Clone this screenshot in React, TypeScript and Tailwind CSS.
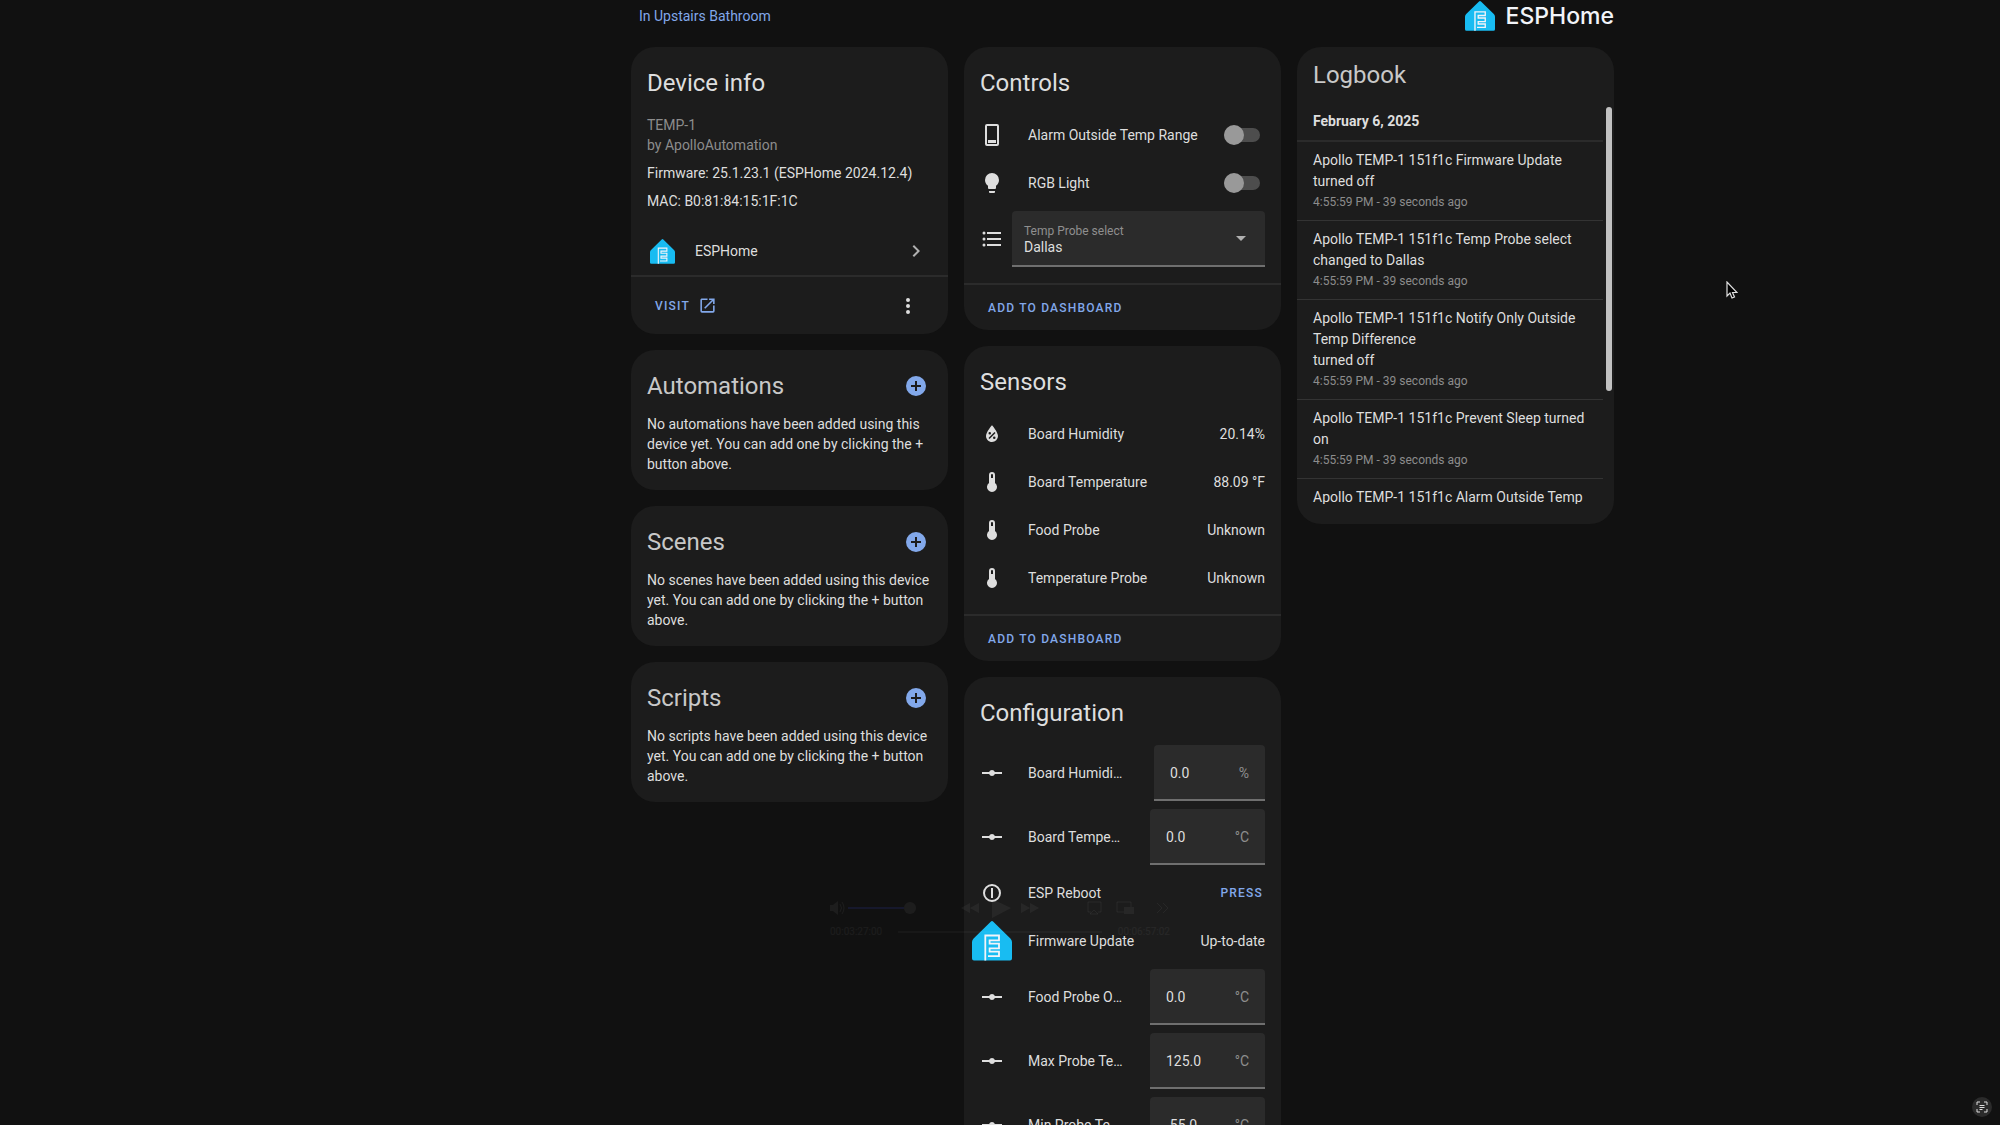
import { useState } from "react";
import type { ReactNode } from "react";

const ICONS = {
  toggle:
    "M17,1H7A2,2 0 0,0 5,3V21A2,2 0 0,0 7,23H17A2,2 0 0,0 19,21V3A2,2 0 0,0 17,1M17,21H7V3H17V21M8,17H16V20H8V17Z",
  bulb: "M12,2A7,7 0 0,0 5,9C5,11.38 6.19,13.47 8,14.74V17A1,1 0 0,0 9,18H15A1,1 0 0,0 16,17V14.74C17.81,13.47 19,11.38 19,9A7,7 0 0,0 12,2M9,21A1,1 0 0,0 10,22H14A1,1 0 0,0 15,21V20H9V21Z",
  list: "M7,5H21V7H7V5M7,13V11H21V13H7M4,4.5A1.5,1.5 0 0,1 4,7.5A1.5,1.5 0 0,1 4,4.5M4,10.5A1.5,1.5 0 0,1 4,13.5A1.5,1.5 0 0,1 4,10.5M7,19V17H21V19H7M4,16.5A1.5,1.5 0 0,1 4,19.5A1.5,1.5 0 0,1 4,16.5Z",
  humidity:
    "M12,3.25C12,3.25 6,10 6,14C6,17.32 8.69,20 12,20A6,6 0 0,0 18,14C18,10 12,3.25 12,3.25M14.47,9.97L15.53,11.03L9.53,17.03L8.47,15.97M9.75,10A1.25,1.25 0 0,1 9.75,12.5A1.25,1.25 0 0,1 9.75,10M14.25,14.5A1.25,1.25 0 0,1 14.25,17A1.25,1.25 0 0,1 14.25,14.5Z",
  thermometer:
    "M15 13V5A3 3 0 0 0 9 5V13A5 5 0 1 0 15 13M12 4A1 1 0 0 1 13 5V8H11V5A1 1 0 0 1 12 4Z",
  vertex:
    "M22,11H14.82C14.4,9.84 13.3,9 12,9C10.7,9 9.6,9.84 9.18,11H2V13H9.18C9.6,14.16 10.7,15 12,15C13.3,15 14.4,14.16 14.82,13H22V11Z",
  reboot:
    "M12,3A9,9 0 0,0 12,21A9,9 0 0,0 12,3M12,19A7,7 0 0,1 12,5A7,7 0 0,1 12,19M11,7H13V17H11V7Z",
  open: "M14,3V5H17.59L7.76,14.83L9.17,16.24L19,6.41V10H21V3M19,19H5V5H12V3H5C3.89,3 3,3.9 3,5V19A2,2 0 0,0 5,21H19A2,2 0 0,0 21,19V12H19V19Z",
  dots: "M12,16A2,2 0 0,1 12,20A2,2 0 0,1 12,16M12,10A2,2 0 0,1 12,14A2,2 0 0,1 12,10M12,4A2,2 0 0,1 12,8A2,2 0 0,1 12,4Z",
  plus: "M17,13H13V17H11V13H7V11H11V7H13V11H17M12,2A10,10 0 0,0 12,22A10,10 0 0,0 12,2Z",
  chevron: "M8.59,16.58L13.17,12L8.59,7.41L10,6L16,12L10,18L8.59,16.58Z",
};

type IconName = keyof typeof ICONS;

function Icon({ name, className = "size-6" }: { name: IconName; className?: string }) {
  return (
    <svg viewBox="0 0 24 24" className={`shrink-0 fill-current ${className}`} fillRule="evenodd" aria-hidden="true">
      <path d={ICONS[name]} />
    </svg>
  );
}

function EspHomeLogo({ className }: { className: string }) {
  return (
    <svg viewBox="0 0 40 40" className={`shrink-0 ${className}`} aria-hidden="true">
      <path
        d="M18.7 0.7a1.8 1.8 0 0 1 2.6 0L38.4 17.4A5 5 0 0 1 40 21V37.5A2 2 0 0 1 38 39.5H2A2 2 0 0 1 0 37.5V21a5 5 0 0 1 1.6-3.6Z"
        fill="#18bcf2"
      />
      <path
        d="M13.3 39.5V14.5H27V19.3H17.6V22.7H27V27.4H17.6V30.6H27V35.2H16"
        fill="none"
        stroke="#f2f4f9"
        strokeWidth="1.8"
      />
    </svg>
  );
}

function Card({ children }: { children: ReactNode }) {
  return <section className="rounded-3xl bg-[#1c1c1c]">{children}</section>;
}

function CardFooter({ children }: { children: ReactNode }) {
  return (
    <div className="flex h-[47px] items-center border-t-2 border-[#2b2b2b] px-6">{children}</div>
  );
}

function TextButton({ children }: { children: ReactNode }) {
  return (
    <button className="flex items-center gap-2 text-xs font-medium tracking-widest text-[#82a8ea] uppercase">
      {children}
    </button>
  );
}

function Row({ icon, label, children }: { icon: ReactNode; label: string; children: ReactNode }) {
  return (
    <div className="flex min-h-10 items-center">
      <span className="flex w-10 shrink-0 justify-center">{icon}</span>
      <span className="min-w-0 flex-1 truncate pl-4">{label}</span>
      {children}
    </div>
  );
}

function EntityCard({
  title,
  footer = true,
  children,
}: {
  title: string;
  footer?: boolean;
  children: ReactNode;
}) {
  return (
    <Card>
      <h2 className="px-4 pt-3 text-2xl leading-[48px]">{title}</h2>
      <div className="flex flex-col gap-2 pt-2 pr-4 pb-4 pl-2">{children}</div>
      {footer && (
        <CardFooter>
          <TextButton>Add to dashboard</TextButton>
        </CardFooter>
      )}
    </Card>
  );
}

function ToggleRow({ icon, label }: { icon: IconName; label: string }) {
  const [on, setOn] = useState(false);

  return (
    <Row icon={<Icon name={icon} />} label={label}>
      <label className="relative mr-[5px] flex h-5 w-9 items-center">
        <input
          type="checkbox"
          role="switch"
          aria-label={label}
          checked={on}
          onChange={() => setOn(!on)}
          className="peer absolute inset-0 appearance-none"
        />
        <span className="h-[14px] w-9 rounded-full bg-[#4d4d4d]" />
        <span className="pointer-events-none absolute left-0 size-5 rounded-full bg-[#999999] peer-checked:left-4 peer-checked:bg-[#82a8ea]" />
      </label>
    </Row>
  );
}

function NumberRow({ label, value, unit }: { label: string; value: string; unit: string }) {
  return (
    <Row icon={<Icon name="vertex" />} label={label}>
      <label
        className={`flex h-14 shrink-0 items-center rounded-t border-b-2 border-[#6f6f6f] bg-[#2b2b2b] px-4 pt-0.5 ${
          unit === "%" ? "ml-[30px] w-[111px]" : "ml-[26px] w-[115px]"
        }`}
      >
        <input aria-label={label} defaultValue={value} className="w-full min-w-0 outline-none" />
        <span className="text-[#8f8f8f]">{unit}</span>
      </label>
    </Row>
  );
}

const EMPTY_SECTIONS = [
  { title: "Automations", noun: "automations" },
  { title: "Scenes", noun: "scenes" },
  { title: "Scripts", noun: "scripts" },
];

const SENSORS: { icon: IconName; label: string; value: string }[] = [
  { icon: "humidity", label: "Board Humidity", value: "20.14%" },
  { icon: "thermometer", label: "Board Temperature", value: "88.09 °F" },
  { icon: "thermometer", label: "Food Probe", value: "Unknown" },
  { icon: "thermometer", label: "Temperature Probe", value: "Unknown" },
];

const LOG = [
  ["Apollo TEMP-1 151f1c Firmware Update", "turned off"],
  ["Apollo TEMP-1 151f1c Temp Probe select", "changed to Dallas"],
  ["Apollo TEMP-1 151f1c Notify Only Outside", "Temp Difference", "turned off"],
  ["Apollo TEMP-1 151f1c Prevent Sleep turned", "on"],
  ["Apollo TEMP-1 151f1c Alarm Outside Temp", "Range turned off"],
];

function DeviceInfo() {
  return (
    <Card>
      <div className="px-4 pt-3">
        <h2 className="text-2xl leading-[48px]">Device info</h2>
        <p className="pt-2 text-[#8c8c8c]">TEMP-1</p>
        <p className="text-[#8c8c8c]">by ApolloAutomation</p>
        <p className="pt-2">Firmware: 25.1.23.1 (ESPHome 2024.12.4)</p>
        <p className="pt-2">MAC: B0:81:84:15:1F:1C</p>
      </div>
      <a href="#integration" className="mt-4 flex h-12 items-center pr-5 pl-[19px]">
        <EspHomeLogo className="size-[25px]" />
        <span className="flex-1 pl-5">ESPHome</span>
        <Icon name="chevron" className="size-6 text-[#b0b0b0]" />
      </a>
      <div className="flex h-[59px] items-center justify-between border-t-2 border-[#2b2b2b] pr-7 pl-6">
        <TextButton>
          Visit <Icon name="open" className="size-[19px]" />
        </TextButton>
        <button aria-label="More options">
          <Icon name="dots" />
        </button>
      </div>
    </Card>
  );
}

function Logbook() {
  return (
    <Card>
      <h2 className="px-4 pt-2 text-2xl leading-10 text-[#c8c8c8]">Logbook</h2>
      <div className="relative mt-3 mb-5 h-[397px] overflow-hidden pr-[11px]">
        <h3 className="px-4 pt-1 pb-[9px] leading-5 font-bold">February 6, 2025</h3>
        <ul>
          {LOG.map((lines) => (
            <li key={lines[0]} className="border-t border-[#333333] px-4 py-2 first:border-t-2 first:border-[#2b2b2b]">
              {lines.map((line) => (
                <p key={line} className="leading-[21px]">
                  {line}
                </p>
              ))}
              <p className="text-xs leading-5 text-[#8c8c8c]">4:55:59 PM - 39 seconds ago</p>
            </li>
          ))}
        </ul>
        <span className="absolute top-0 right-0.5 h-[284px] w-1.5 rounded-full bg-[#c1c1c1]" />
      </div>
    </Card>
  );
}

// Nearly transparent playback bar, caught while it fades out
function PlayerGhost() {
  return (
    <div className="pointer-events-none absolute top-[890px] left-[822px] flex h-[56px] w-[356px] flex-col justify-between px-2 py-1 text-white/5">
      <svg viewBox="0 0 340 28" className="h-7 w-full shrink-0" fill="currentColor" aria-hidden="true">
        <path d="M0 11h3l5-4v14l-5-4H0z" />
        <path d="M10 10q3 4 0 8M12 8q4 6 0 12" fill="none" stroke="currentColor" />
        <path d="M18 13h56v2H18z" fill="#16182c" />
        <circle cx="80" cy="14" r="6" />
        <path d="M131 14l9-5v10zM140 14l9-5v10zM162 5l19 9-19 10zM191 9l9 5-9 5zM200 9l9 5-9 5z" />
        <path
          d="M261 18h-3v-10h13v10h-3M260 20h8l-4-4zM294 18h-7v-10h14v5M333 9l5 5-5 5M327 9l5 5-5 5"
          fill="none"
          stroke="currentColor"
        />
        <path d="M294 13h10v7h-10z" />
      </svg>
      <div className="flex items-center gap-4 text-[10px] leading-5">
        <span>00:03:27:00</span>
        <span className="h-0.5 flex-1 bg-white/3" />
        <span>00:06:57:02</span>
      </div>
    </div>
  );
}

export default function App() {
  return (
    <div className="relative h-screen overflow-hidden bg-[#111111] pl-[245px] font-[Roboto,sans-serif] text-sm leading-5 text-[#dedede]">
      <main className="mx-auto max-w-[983px]">
        <header className="flex h-[47px] items-start justify-between">
          <a href="#area" className="pt-[6px] pl-2 text-[#82a8ea]">
            In Upstairs Bathroom
          </a>
          <div className="flex items-center gap-[11px] pt-[1px]">
            <EspHomeLogo className="size-[30px]" />
            <span className="font-[Inter,sans-serif] text-[23px] font-medium text-[#f2f4f9]">ESPHome</span>
          </div>
        </header>

        <div className="grid grid-cols-3 items-start gap-4">
          <div className="flex flex-col gap-4">
            <DeviceInfo />
            {EMPTY_SECTIONS.map(({ title, noun }) => (
              <Card key={title}>
                <div className="flex items-center justify-between pt-3 pr-5 pl-4">
                  <h2 className="text-2xl leading-[48px] text-[#c8c8c8]">{title}</h2>
                  <button aria-label={`Add ${noun}`} className="text-[#82a8ea]">
                    <Icon name="plus" />
                  </button>
                </div>
                <p className="px-4 pt-1 pb-4">
                  {`No ${noun} have been added using this device yet. You can add one by clicking the + button above.`}
                </p>
              </Card>
            ))}
          </div>

          <div className="flex flex-col gap-4">
            <EntityCard title="Controls">
              <ToggleRow icon="toggle" label="Alarm Outside Temp Range" />
              <ToggleRow icon="bulb" label="RGB Light" />
              <div className="flex items-center">
                <span className="flex w-10 shrink-0 justify-center">
                  <Icon name="list" />
                </span>
                <div className="relative flex h-14 flex-1 flex-col justify-center rounded-t border-b-2 border-[#6f6f6f] bg-[#2b2b2b] pt-0.5">
                  <label htmlFor="probe" className="px-3 text-xs leading-4 text-[#8f8f8f]">
                    Temp Probe select
                  </label>
                  <select id="probe" className="h-4 w-full appearance-none px-3 leading-4 outline-none">
                    <option>Dallas</option>
                  </select>
                  <svg
                    viewBox="0 0 10 5"
                    className="pointer-events-none absolute top-[25px] right-[19px] h-[5px] w-[10px] fill-[#b0b0b0]"
                    aria-hidden="true"
                  >
                    <path d="M0 0h10L5 5z" />
                  </svg>
                </div>
              </div>
            </EntityCard>

            <EntityCard title="Sensors">
              {SENSORS.map(({ icon, label, value }) => (
                <Row key={label} icon={<Icon name={icon} />} label={label}>
                  <span>{value}</span>
                </Row>
              ))}
            </EntityCard>

            <EntityCard title="Configuration" footer={false}>
              <NumberRow label="Board Humidity Offset" value="0.0" unit="%" />
              <NumberRow label="Board Temperature Offset" value="0.0" unit="°C" />
              <Row icon={<Icon name="reboot" />} label="ESP Reboot">
                <span className="pr-0.5">
                  <TextButton>Press</TextButton>
                </span>
              </Row>
              <Row icon={<EspHomeLogo className="size-10" />} label="Firmware Update">
                <span>Up-to-date</span>
              </Row>
              <NumberRow label="Food Probe Offset" value="0.0" unit="°C" />
              <NumberRow label="Max Probe Temp" value="125.0" unit="°C" />
              <NumberRow label="Min Probe Temp" value="-55.0" unit="°C" />
            </EntityCard>
          </div>

          <Logbook />
        </div>
      </main>

      <PlayerGhost />

      <svg viewBox="0 0 12 18" className="absolute top-[281px] left-[1726px] h-[18px] w-3" aria-hidden="true">
        <path d="M1 1v14l3-3 2 5 2.5-1L6.5 11.5H11z" fill="#000000" stroke="#e0e0e0" strokeWidth="1.2" />
      </svg>

      <button
        aria-label="Scan screen"
        className="absolute right-2 bottom-2 flex size-5 items-center justify-center rounded-full bg-[#2b2b2b]"
      >
        <svg viewBox="0 0 12 12" className="size-3" fill="none" stroke="#dedede" aria-hidden="true">
          <path d="M1 4V1h3M8 1h3v3M11 8v3H8M4 11H1V8M3.5 4.5h5M3.5 6.5h5M3.5 8.5h3" />
        </svg>
      </button>
    </div>
  );
}
